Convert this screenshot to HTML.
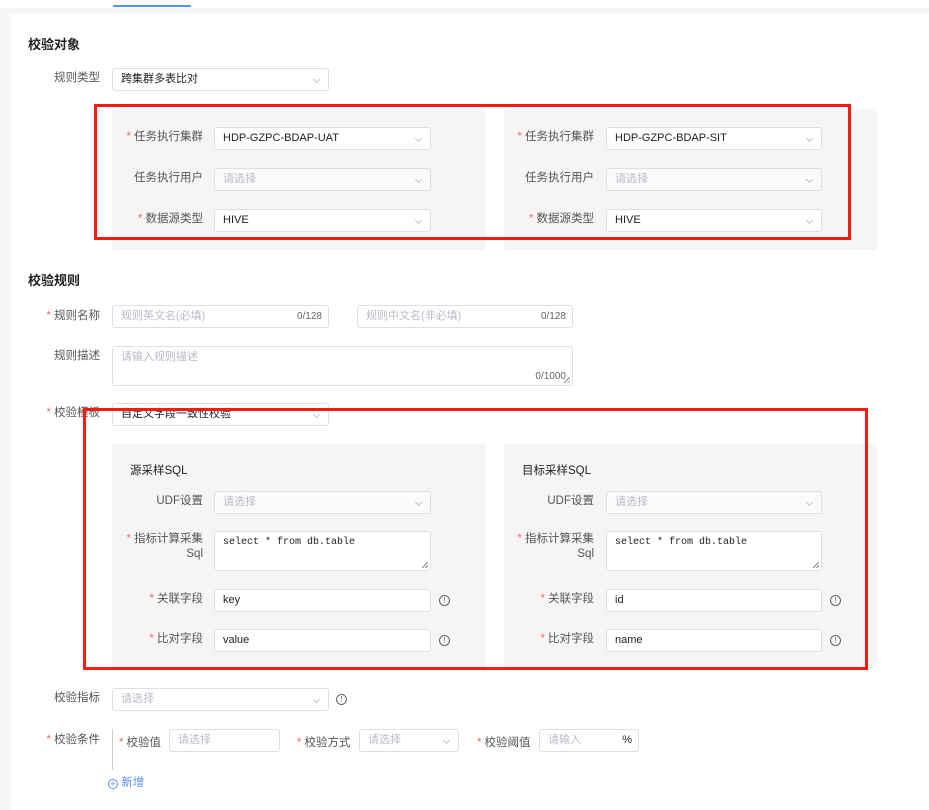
<!DOCTYPE html>
<html><head><meta charset="utf-8"><style>
*{box-sizing:border-box;margin:0;padding:0}
body{width:929px;height:810px;overflow:hidden;background:#f5f6f8;font-family:"Liberation Sans","Noto Sans CJK SC",sans-serif;font-size:12px;color:#333;position:relative}
.a{position:absolute}
.card{left:10px;top:14px;width:919px;height:796px;background:#fff}
.h{font-weight:bold;font-size:13px;color:#222}
.lb{position:absolute;text-align:right;color:#555;font-size:11.5px;white-space:nowrap}
.lb i{color:#f56c6c;font-style:normal;margin-right:3px}
.in{position:absolute;height:23px;border:1px solid #dcdfe6;border-radius:3px;background:#fff;font-size:11px;line-height:21px;padding-left:8px;color:#222;white-space:nowrap}
.ph{color:#b8bcc4}
.dis{background:#fafafa}
.ar{position:absolute;right:9px;top:8px;width:5px;height:5px;border-right:1px solid #c0c4cc;border-bottom:1px solid #c0c4cc;transform:rotate(45deg)}
.pn{position:absolute;background:#f5f5f5;border-radius:3px}
.red{position:absolute;border:3px solid #ff1a0e}
.info{position:absolute;width:11px;height:11px;border:1px solid #666;border-radius:50%;font-size:8px;line-height:9px;text-align:center;color:#666}
.cnt{position:absolute;right:6px;font-size:10px;color:#666}
.mono{font-family:"Liberation Mono",monospace;font-size:10px}
.rs{position:absolute;right:2px;bottom:2px;width:6px;height:6px;background:linear-gradient(135deg,transparent 45%,#888 45%,#888 55%,transparent 55%,transparent 75%,#888 75%,#888 85%,transparent 85%)}
</style></head><body>
<div class="a" style="left:0;top:0;width:929px;height:8px;background:#fff"></div>
<div class="a" style="left:113px;top:5px;width:78px;height:2px;background:#5b8ff9"></div>
<div class="a card"></div>

<div class="a h" style="left:28px;top:34px">校验对象</div>
<div class="lb" style="right:829px;top:69px">规则类型</div>
<div class="in" style="left:112px;top:68px;width:217px">跨集群多表比对<span class="ar"></span></div>

<div class="pn" style="left:112px;top:109px;width:374px;height:141px"></div>
<div class="pn" style="left:504px;top:109px;width:373px;height:141px"></div>

<div class="lb" style="right:726px;top:128px"><i>*</i>任务执行集群</div>
<div class="in" style="left:214px;top:127px;width:217px">HDP-GZPC-BDAP-UAT<span class="ar"></span></div>
<div class="lb" style="right:726px;top:169px">任务执行用户</div>
<div class="in dis ph" style="left:214px;top:168px;width:217px">请选择<span class="ar"></span></div>
<div class="lb" style="right:726px;top:210px"><i>*</i>数据源类型</div>
<div class="in" style="left:214px;top:209px;width:217px">HIVE<span class="ar"></span></div>

<div class="lb" style="right:335px;top:128px"><i>*</i>任务执行集群</div>
<div class="in" style="left:606px;top:127px;width:216px">HDP-GZPC-BDAP-SIT<span class="ar"></span></div>
<div class="lb" style="right:335px;top:169px">任务执行用户</div>
<div class="in dis ph" style="left:606px;top:168px;width:216px">请选择<span class="ar"></span></div>
<div class="lb" style="right:335px;top:210px"><i>*</i>数据源类型</div>
<div class="in" style="left:606px;top:209px;width:216px">HIVE<span class="ar"></span></div>

<div class="red" style="left:94px;top:104px;width:757px;height:136px"></div>

<div class="a h" style="left:28px;top:270px">校验规则</div>
<div class="lb" style="right:829px;top:307px"><i>*</i>规则名称</div>
<div class="in ph" style="left:112px;top:305px;width:217px">规则英文名(必填)<span class="cnt">0/128</span></div>
<div class="in ph" style="left:357px;top:305px;width:216px">规则中文名(非必填)<span class="cnt">0/128</span></div>
<div class="lb" style="right:829px;top:347px">规则描述</div>
<div class="in ph" style="left:112px;top:346px;width:461px;height:40px">请输入规则描述<span class="cnt" style="top:24px;line-height:12px">0/1000</span><span class="rs"></span></div>
<div class="lb" style="right:829px;top:404px"><i>*</i>校验模板</div>
<div class="in" style="left:112px;top:403px;width:217px">自定义字段一致性校验<span class="ar"></span></div>

<div class="pn" style="left:112px;top:444px;width:374px;height:224px"></div>
<div class="pn" style="left:504px;top:444px;width:373px;height:224px"></div>

<div class="a" style="left:130px;top:462px;font-size:11.5px;color:#222">源采样SQL</div>
<div class="lb" style="right:726px;top:492px">UDF设置</div>
<div class="in dis ph" style="left:214px;top:491px;width:217px">请选择<span class="ar"></span></div>
<div class="lb" style="right:726px;top:532px;line-height:15px"><i>*</i>指标计算采集<br>Sql</div>
<div class="in mono" style="left:214px;top:531px;width:217px;height:40px;line-height:22px">select * from db.table<span class="rs"></span></div>
<div class="lb" style="right:726px;top:590px"><i>*</i>关联字段</div>
<div class="in" style="left:214px;top:589px;width:217px">key</div>
<div class="info" style="left:439px;top:595px">!</div>
<div class="lb" style="right:726px;top:630px"><i>*</i>比对字段</div>
<div class="in" style="left:214px;top:629px;width:217px">value</div>
<div class="info" style="left:439px;top:635px">!</div>

<div class="a" style="left:522px;top:462px;font-size:11.5px;color:#222">目标采样SQL</div>
<div class="lb" style="right:335px;top:492px">UDF设置</div>
<div class="in dis ph" style="left:606px;top:491px;width:216px">请选择<span class="ar"></span></div>
<div class="lb" style="right:335px;top:532px;line-height:15px"><i>*</i>指标计算采集<br>Sql</div>
<div class="in mono" style="left:606px;top:531px;width:216px;height:40px;line-height:22px">select * from db.table<span class="rs"></span></div>
<div class="lb" style="right:335px;top:590px"><i>*</i>关联字段</div>
<div class="in" style="left:606px;top:589px;width:216px">id</div>
<div class="info" style="left:830px;top:595px">!</div>
<div class="lb" style="right:335px;top:630px"><i>*</i>比对字段</div>
<div class="in" style="left:606px;top:629px;width:216px">name</div>
<div class="info" style="left:830px;top:635px">!</div>

<div class="red" style="left:83px;top:408px;width:785px;height:262px"></div>

<div class="lb" style="right:829px;top:689px">校验指标</div>
<div class="in ph" style="left:112px;top:688px;width:217px">请选择<span class="ar"></span></div>
<div class="info" style="left:336px;top:694px">!</div>
<div class="lb" style="right:829px;top:731px"><i>*</i>校验条件</div>
<div class="a" style="left:112px;top:729px;width:1px;height:41px;background:#ccc"></div>
<div class="lb" style="left:119px;top:734px;text-align:left"><i>*</i>校验值</div>
<div class="in ph" style="left:169px;top:729px;width:111px">请选择</div>
<div class="lb" style="left:297px;top:734px;text-align:left"><i>*</i>校验方式</div>
<div class="in ph" style="left:359px;top:729px;width:100px">请选择<span class="ar"></span></div>
<div class="lb" style="left:477px;top:734px;text-align:left"><i>*</i>校验阈值</div>
<div class="in ph" style="left:539px;top:729px;width:100px">请输入<span style="position:absolute;right:6px;color:#222">%</span></div>
<div class="a" style="left:108px;top:774px;color:#5b8ff9;font-size:11.5px"><span style="display:inline-block;width:10px;height:10px;border:1px solid #5b8ff9;border-radius:50%;font-size:9px;line-height:8px;text-align:center;vertical-align:-1px">+</span> 新增</div>
</body></html>
